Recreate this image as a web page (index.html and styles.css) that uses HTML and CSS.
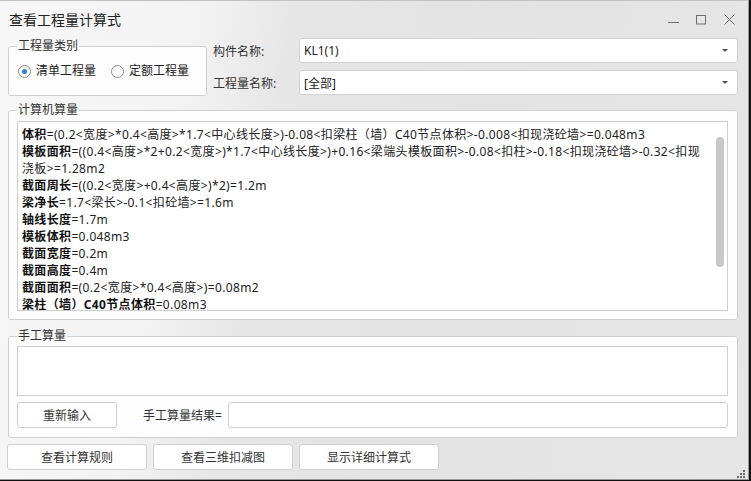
FILE: index.html
```html
<!DOCTYPE html>
<html lang="zh-CN">
<head>
    <meta charset="UTF-8">
    <meta name="viewport" content="width=device-width, initial-scale=1.0">
    <title>查看工程量计算式</title>
    <link rel="stylesheet" href="styles.css">
</head>
<body>

<div class="window">
    <!-- 标题栏 -->
    <div class="titlebar">
        <span class="title">查看工程量计算式</span>
        <div class="controls">
            <svg width="11" height="11" viewBox="0 0 11 11"><path d="M0 8.5h11" stroke="#6f6f6f" stroke-width="1"/></svg>
            <svg width="11" height="11" viewBox="0 0 11 11"><rect x="0.5" y="1.5" width="9" height="8.5" fill="none" stroke="#6f6f6f" stroke-width="1"/></svg>
            <svg width="11" height="11" viewBox="0 0 11 11"><path d="M0.5 0.5L10.5 10.5M10.5 0.5L0.5 10.5" stroke="#6f6f6f" stroke-width="1"/></svg>
        </div>
    </div>

    <div class="content">
        <div class="top-row">
            <fieldset class="group type-group">
                <legend>工程量类别</legend>
                <div class="radios">
                    <label class="radio"><span class="dot checked"></span>清单工程量</label>
                    <label class="radio"><span class="dot"></span>定额工程量</label>
                </div>
            </fieldset>

            <div class="fields">
                <div class="field">
                    <span class="field-label">构件名称:</span>
                    <div class="combo"><span>KL1(1)</span><span class="arrow"></span></div>
                </div>
                <div class="field">
                    <span class="field-label">工程量名称:</span>
                    <div class="combo"><span>[全部]</span><span class="arrow"></span></div>
                </div>
            </div>
        </div>

        <!-- 计算机算量 -->
        <fieldset class="group calc-group">
            <legend>计算机算量</legend>
            <div class="calc-box">
                <div class="calc-text">
                    <p><b>体积</b>=(0.2&lt;宽度&gt;*0.4&lt;高度&gt;*1.7&lt;中心线长度&gt;)-0.08&lt;扣梁柱（墙）C40节点体积&gt;-0.008&lt;扣现浇砼墙&gt;=0.048m3</p>
                    <p><b>模板面积</b>=((0.4&lt;高度&gt;*2+0.2&lt;宽度&gt;)*1.7&lt;中心线长度&gt;)+0.16&lt;梁端头模板面积&gt;-0.08&lt;扣柱&gt;-0.18&lt;扣现浇砼墙&gt;-0.32&lt;扣现浇板&gt;=1.28m2</p>
                    <p><b>截面周长</b>=((0.2&lt;宽度&gt;+0.4&lt;高度&gt;)*2)=1.2m</p>
                    <p><b>梁净长</b>=1.7&lt;梁长&gt;-0.1&lt;扣砼墙&gt;=1.6m</p>
                    <p><b>轴线长度</b>=1.7m</p>
                    <p><b>模板体积</b>=0.048m3</p>
                    <p><b>截面宽度</b>=0.2m</p>
                    <p><b>截面高度</b>=0.4m</p>
                    <p><b>截面面积</b>=(0.2&lt;宽度&gt;*0.4&lt;高度&gt;)=0.08m2</p>
                    <p><b>梁柱（墙）C40节点体积</b>=0.08m3</p>
                </div>
                <div class="scroll-track"><div class="scroll-thumb"></div></div>
            </div>
        </fieldset>

        <!-- 手工算量 -->
        <fieldset class="group manual-group">
            <legend>手工算量</legend>
            <div class="manual-input"></div>
            <div class="manual-row">
                <button class="btn reset-btn">重新输入</button>
                <span class="result-label">手工算量结果=</span>
                <div class="result-input"></div>
            </div>
        </fieldset>

        <div class="bottom-buttons">
            <button class="btn wide-btn">查看计算规则</button>
            <button class="btn wide-btn">查看三维扣减图</button>
            <button class="btn wide-btn">显示详细计算式</button>
        </div>
    </div>

    <svg class="grip" width="10" height="9" viewBox="0 0 10 9">
        <rect x="7" y="0" width="2" height="2" fill="#6a6a6a"/>
        <rect x="4" y="3" width="2" height="2" fill="#6a6a6a"/>
        <rect x="7" y="3" width="2" height="2" fill="#6a6a6a"/>
        <rect x="1" y="6" width="2" height="2" fill="#6a6a6a"/>
        <rect x="4" y="6" width="2" height="2" fill="#6a6a6a"/>
        <rect x="7" y="6" width="2" height="2" fill="#6a6a6a"/>
    </svg>
</div>

</body>
</html>
```

FILE: styles.css
```css
body {
    margin: 0;
    padding: 0;
    background-color: #111;
    font-family: "Noto Sans", "Noto Sans CJK SC", sans-serif;
    font-size: 12px;
    color: #333;
}
.window {
    position: relative;
    width: 748px;
    height: 478px;
    border-top: 1px solid #c2c2c2;
    border-right: 1px solid #9a9a9a;
    border-bottom: 1px solid #9a9a9a;
    background: linear-gradient(100deg, #f7f7f7 0%, #f3f3f3 24%, #e6e6e6 36%, #e3e3e3 60%, #e6e6e6 100%);
    overflow: hidden;
}
.titlebar {
    display: flex;
    justify-content: space-between;
    height: 37px;
}
.title {
    padding-left: 9px;
    font-size: 14px;
    line-height: 37px;
    color: #222;
}
.controls {
    display: flex;
    gap: 17px;
    padding-top: 13px;
    padding-right: 13px;
}
.controls svg {
    display: block;
}
.content {
    padding: 0 10px 0 8px;
}
.top-row {
    display: flex;
}
.group {
    margin: 0;
    border: 1px solid #d0d0d0;
    border-radius: 3px;
    background-color: #fdfdfd;
}
.group legend {
    margin-left: 0;
    padding: 0 1px;
    line-height: 14px;
    color: #333;
}
.type-group {
    width: 199px;
    box-sizing: border-box;
    height: 57px;
    margin-top: 1px;
    padding: 11px 9px 0 9px;
}
.type-group legend {
    margin-left: -1px;
}
.radios {
    display: flex;
    gap: 15px;
}
.radio {
    display: flex;
    align-items: center;
    gap: 5px;
    line-height: 14px;
    font-size: 12px;
    color: #222;
}
.dot {
    width: 11px;
    height: 11px;
    border: 1px solid #8c8c8c;
    border-radius: 50%;
    background-color: #fff;
    position: relative;
}
.dot.checked::after {
    content: "";
    position: absolute;
    left: 3px;
    top: 3px;
    width: 5px;
    height: 5px;
    border-radius: 50%;
    background-color: #2a7de1;
}
.fields {
    flex: 1;
    display: flex;
    flex-direction: column;
    gap: 7px;
    margin-left: 6px;
}
.field {
    display: flex;
    align-items: center;
    height: 25px;
}
.field-label {
    width: 86px;
    color: #333;
}
.combo {
    flex: 1;
    height: 25px;
    box-sizing: border-box;
    display: flex;
    align-items: center;
    justify-content: space-between;
    padding: 0 9px 0 4px;
    background-color: #fff;
    border: 1px solid #d2d2d2;
    border-radius: 3px;
    color: #222;
}
.arrow {
    width: 0;
    height: 0;
    border-left: 3px solid transparent;
    border-right: 3px solid transparent;
    border-top: 3px solid #555;
}
.calc-group {
    margin-top: 7px;
    padding: 4px 9px 8px 8px;
}
.calc-box {
    display: flex;
    height: 190px;
    box-sizing: border-box;
    border: 1px solid #cfcfcf;
    background-color: #fff;
    overflow: hidden;
}
.calc-text {
    flex: 1;
    padding: 4px 0 0 4px;
    color: #222;
    line-height: 17px;
    letter-spacing: 0.35px;
}
.calc-text p {
    margin: 0;
}
.calc-text b {
    color: #111;
}
.scroll-track {
    width: 8px;
    padding-top: 15px;
    margin: 0 3px 0 6px;
}
.scroll-thumb {
    height: 130px;
    border-radius: 4px;
    background-color: #c8c8c8;
}
.manual-group {
    margin-top: 9px;
    padding: 3px 9px 9px 8px;
}
.manual-input {
    height: 50px;
    box-sizing: border-box;
    border: 1px solid #cfcfcf;
    background-color: #fff;
}
.manual-row {
    display: flex;
    align-items: center;
    margin-top: 6px;
}
.btn {
    height: 26px;
    box-sizing: border-box;
    background-color: #fff;
    border: 1px solid #cfcfcf;
    border-radius: 3px;
    font-family: "Noto Sans", "Noto Sans CJK SC", sans-serif;
    font-size: 12px;
    color: #333;
    padding: 0;
}
.reset-btn {
    width: 100px;
}
.result-label {
    margin-left: 26px;
    margin-right: 6px;
    color: #333;
}
.result-input {
    flex: 1;
    height: 26px;
    box-sizing: border-box;
    border: 1px solid #cfcfcf;
    border-radius: 3px;
    background-color: #fff;
}
.bottom-buttons {
    display: flex;
    gap: 6px;
    margin-top: 6px;
    margin-left: -1px;
}
.wide-btn {
    width: 140px;
}
.grip {
    position: absolute;
    right: 2px;
    bottom: 0;
}
```
